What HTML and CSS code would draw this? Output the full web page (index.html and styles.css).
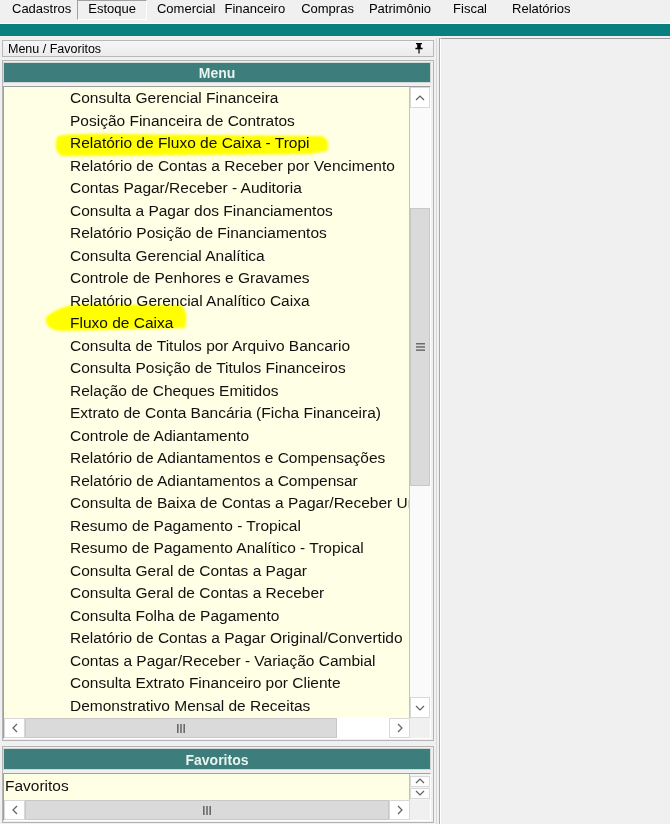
FILE: index.html
```html
<!DOCTYPE html>
<html>
<head>
<meta charset="utf-8">
<link rel="stylesheet" href="styles.css">
</head>
<body>
<div class="menubar">
  <span class="mi m1">Cadastros</span>
  <span class="mi m2 active">Estoque</span>
  <span class="mi m3">Comercial</span>
  <span class="mi m4">Financeiro</span>
  <span class="mi m5">Compras</span>
  <span class="mi m6">Patrimônio</span>
  <span class="mi m7">Fiscal</span>
  <span class="mi m8">Relatórios</span>
</div>
<div class="teal"></div>
<div class="main">
  <div class="left">
    <div class="phdr">
      <span>Menu / Favoritos</span>
      <svg class="pin" width="8" height="11" viewBox="0 0 8 11"><path d="M1 0h6v1.2H5.8v3.6H7.6v1.5H4.6V10.5H3.4V6.3H0.4V4.8H2.2V1.2H1z" fill="#000"/></svg>
    </div>
    <div class="frame menu-frame">
      <div class="title">Menu</div>
      <div class="box">
        <div class="rowtop menu-row">
          <div class="list">
            <div class="item">Consulta Gerencial Financeira</div>
            <div class="item">Posição Financeira de Contratos</div>
            <div class="item">Relatório de Fluxo de Caixa - Tropi</div>
            <div class="item">Relatório de Contas a Receber por Vencimento</div>
            <div class="item">Contas Pagar/Receber - Auditoria</div>
            <div class="item">Consulta a Pagar dos Financiamentos</div>
            <div class="item">Relatório Posição de Financiamentos</div>
            <div class="item">Consulta Gerencial Analítica</div>
            <div class="item">Controle de Penhores e Gravames</div>
            <div class="item">Relatório Gerencial Analítico Caixa</div>
            <div class="item">Fluxo de Caixa</div>
            <div class="item">Consulta de Titulos por Arquivo Bancario</div>
            <div class="item">Consulta Posição de Titulos Financeiros</div>
            <div class="item">Relação de Cheques Emitidos</div>
            <div class="item">Extrato de Conta Bancária (Ficha Financeira)</div>
            <div class="item">Controle de Adiantamento</div>
            <div class="item">Relatório de Adiantamentos e Compensações</div>
            <div class="item">Relatório de Adiantamentos a Compensar</div>
            <div class="item">Consulta de Baixa de Contas a Pagar/Receber Unificada</div>
            <div class="item">Resumo de Pagamento - Tropical</div>
            <div class="item">Resumo de Pagamento Analítico - Tropical</div>
            <div class="item">Consulta Geral de Contas a Pagar</div>
            <div class="item">Consulta Geral de Contas a Receber</div>
            <div class="item">Consulta Folha de Pagamento</div>
            <div class="item">Relatório de Contas a Pagar Original/Convertido</div>
            <div class="item">Contas a Pagar/Receber - Variação Cambial</div>
            <div class="item">Consulta Extrato Financeiro por Cliente</div>
            <div class="item">Demonstrativo Mensal de Receitas</div>
          </div>
          <div class="vscroll">
            <div class="sbtn vbtn"><svg width="10" height="6" viewBox="0 0 10 6"><polyline points="1,5 5,1 9,5" fill="none" stroke="#606060" stroke-width="1.2"/></svg></div>
            <div class="vtrack-a"></div>
            <div class="vthumb"><svg width="9" height="8" viewBox="0 0 9 8"><rect x="0" y="0" width="9" height="1.5" fill="#6a6a6a"/><rect x="0" y="3.2" width="9" height="1.5" fill="#6a6a6a"/><rect x="0" y="6.4" width="9" height="1.5" fill="#6a6a6a"/></svg></div>
            <div class="vtrack-b"></div>
            <div class="sbtn vbtn"><svg width="10" height="6" viewBox="0 0 10 6"><polyline points="1,1 5,5 9,1" fill="none" stroke="#606060" stroke-width="1.2"/></svg></div>
          </div>
        </div>
        <div class="hscroll">
          <div class="sbtn hbtn"><svg width="6" height="10" viewBox="0 0 6 10"><polyline points="5,1 1,5 5,9" fill="none" stroke="#606060" stroke-width="1.2"/></svg></div>
          <div class="hthumb menu-thumb"><svg width="8" height="9" viewBox="0 0 8 9"><rect x="0" y="0" width="1.6" height="9" fill="#6a6a6a"/><rect x="3.2" y="0" width="1.6" height="9" fill="#6a6a6a"/><rect x="6.4" y="0" width="1.6" height="9" fill="#6a6a6a"/></svg></div>
          <div class="htrack"></div>
          <div class="sbtn hbtn"><svg width="6" height="10" viewBox="0 0 6 10"><polyline points="1,1 5,5 1,9" fill="none" stroke="#606060" stroke-width="1.2"/></svg></div>
          <div class="corner"></div>
        </div>
      </div>
    </div>
    <div class="frame fav-frame">
      <div class="title">Favoritos</div>
      <div class="box">
        <div class="rowtop fav-row">
          <div class="list fav-list">Favoritos</div>
          <div class="vmini">
            <div class="mbtn"><svg width="10" height="6" viewBox="0 0 10 6"><polyline points="1,5 5,1 9,5" fill="none" stroke="#606060" stroke-width="1.2"/></svg></div>
            <div class="mbtn"><svg width="10" height="6" viewBox="0 0 10 6"><polyline points="1,1 5,5 9,1" fill="none" stroke="#606060" stroke-width="1.2"/></svg></div>
          </div>
        </div>
        <div class="hscroll">
          <div class="sbtn hbtn"><svg width="6" height="10" viewBox="0 0 6 10"><polyline points="5,1 1,5 5,9" fill="none" stroke="#606060" stroke-width="1.2"/></svg></div>
          <div class="hthumb fav-thumb"><svg width="8" height="9" viewBox="0 0 8 9"><rect x="0" y="0" width="1.6" height="9" fill="#6a6a6a"/><rect x="3.2" y="0" width="1.6" height="9" fill="#6a6a6a"/><rect x="6.4" y="0" width="1.6" height="9" fill="#6a6a6a"/></svg></div>
          <div class="sbtn hbtn"><svg width="6" height="10" viewBox="0 0 6 10"><polyline points="1,1 5,5 1,9" fill="none" stroke="#606060" stroke-width="1.2"/></svg></div>
          <div class="corner"></div>
        </div>
      </div>
    </div>
  </div>
  <div class="splitter"></div>
  <div class="right"></div>
</div>
<svg class="marks" width="670" height="824" viewBox="0 0 670 824">
  <path d="M57 137 Q 60 133 120 134 L 322 136 Q 331 140 327 151 L 310 154 L 62 156 Q 53 152 57 137 Z" fill="#ffff00"/>
  <path d="M46 317 Q 58 306 80 304 L 181 305 Q 189 311 185 328 L 62 331 Q 44 330 46 317 Z" fill="#ffff00"/>
</svg>
</body>
</html>
```

FILE: styles.css
```css
* { box-sizing: border-box; }
html, body { margin: 0; padding: 0; }
body {
  position: relative;
  width: 670px;
  height: 824px;
  overflow: hidden;
  background: #f0f0f0;
  font-family: "Liberation Sans", Arial, sans-serif;
  color: #000;
}

/* top menu */
.menubar {
  height: 24px;
  display: flex;
  align-items: flex-start;
  padding-left: 12px;
  font-size: 13px;
  background: #f0f0f0;
  border-bottom: 1px solid #ffffff;
}
.mi { height: 20px; line-height: 17px; white-space: nowrap; }
.m2 { margin-left: 6px; padding: 0 10px 0 10px; }
.m3 { margin-left: 10px; }
.m4 { margin-left: 9px; }
.m5 { margin-left: 16px; }
.m6 { margin-left: 15px; }
.m7 { margin-left: 22px; }
.m8 { margin-left: 25px; }
.active {
  border: 1px solid;
  border-color: #a0a0a0 #ffffff #ffffff #a0a0a0;
  line-height: 16px;
}

.teal { height: 12px; background: #0a7f80; }

.main { display: flex; height: 788px; }
.left { width: 436px; padding-top: 4px; }
.splitter { width: 4px; border-left: 1px solid #d8d8d8; border-right: 1px solid #a8a8a8; margin-top: 2px; }
.right {
  flex: 1;
  margin-top: 2px;
  background: #f0f0f0;
  border-top: 1px solid #a0a0a0;
  border-left: 1px solid #ffffff;
}

.phdr {
  margin: 0 2px;
  height: 17px;
  border: 1px solid #b8b8b8;
  background: linear-gradient(#f6f6f6, #ececec);
  display: flex;
  align-items: center;
  justify-content: space-between;
  padding: 0 10px 0 5px;
  font-size: 12.5px;
}
.pin { display: block; margin-top: -1px; }

.frame {
  margin: 3px 2px 0 2px;
  border: 1px solid #b4b4b4;
  padding: 1px 2px 1px 0;
}
.fav-frame { margin-top: 5px; }

.title {
  height: 21px;
  background: #3d7d7b;
  color: #e8f4ef;
  font-weight: bold;
  font-size: 14px;
  text-align: center;
  line-height: 21px;
  border: 1px solid #d0d8d8;
}
.fav-frame .title { height: 22px; line-height: 22px; }

.box {
  margin-top: 3px;
  border: 1px solid;
  border-color: #a0a0a0 #ffffff #ffffff #a0a0a0;
}

.rowtop { display: flex; }
.menu-row { height: 631px; }
.fav-row { height: 26px; }

.list {
  flex: 1;
  overflow: hidden;
  background: #ffffe6;
  border-right: 1px solid #c4c4c4;
}
.item {
  height: 22.5px;
  line-height: 22.5px;
  padding-left: 66px;
  font-size: 15.5px;
  color: #111;
  white-space: nowrap;
}
.fav-list {
  font-size: 15.5px;
  line-height: 24px;
  padding-left: 1px;
  color: #111;
}

.vscroll {
  width: 20px;
  display: flex;
  flex-direction: column;
  background: #fafafa;
}
.sbtn {
  display: flex;
  align-items: center;
  justify-content: center;
  background: #ffffff;
  border: 1px solid #d8d8d8;
}
.vbtn { height: 21px; }
.vtrack-a { height: 100px; }
.vthumb {
  height: 278px;
  background: #dadada;
  border: 1px solid #c8c8c8;
  display: flex;
  align-items: center;
  justify-content: center;
}
.vtrack-b { flex: 1; }

.vmini {
  width: 20px;
  display: flex;
  flex-direction: column;
  justify-content: center;
  gap: 1px;
  background: #f4f4f4;
  padding: 1px 0;
}
.mbtn {
  height: 11px;
  display: flex;
  align-items: center;
  justify-content: center;
  border: 1px solid #d8d8d8;
  background: #fdfdfd;
}

.hscroll {
  height: 20px;
  display: flex;
  background: #fafafa;
}
.hbtn { width: 21px; }
.hthumb {
  background: #dadada;
  border: 1px solid #c8c8c8;
  display: flex;
  align-items: center;
  justify-content: center;
}
.menu-thumb { width: 312px; }
.fav-thumb { flex: 1; }
.htrack { flex: 1; background: #ffffff; }
.corner { width: 20px; background: #f0f0f0; }

.marks {
  position: absolute;
  left: 0;
  top: 0;
  pointer-events: none;
  mix-blend-mode: multiply;
  filter: blur(0.8px);
}
```
